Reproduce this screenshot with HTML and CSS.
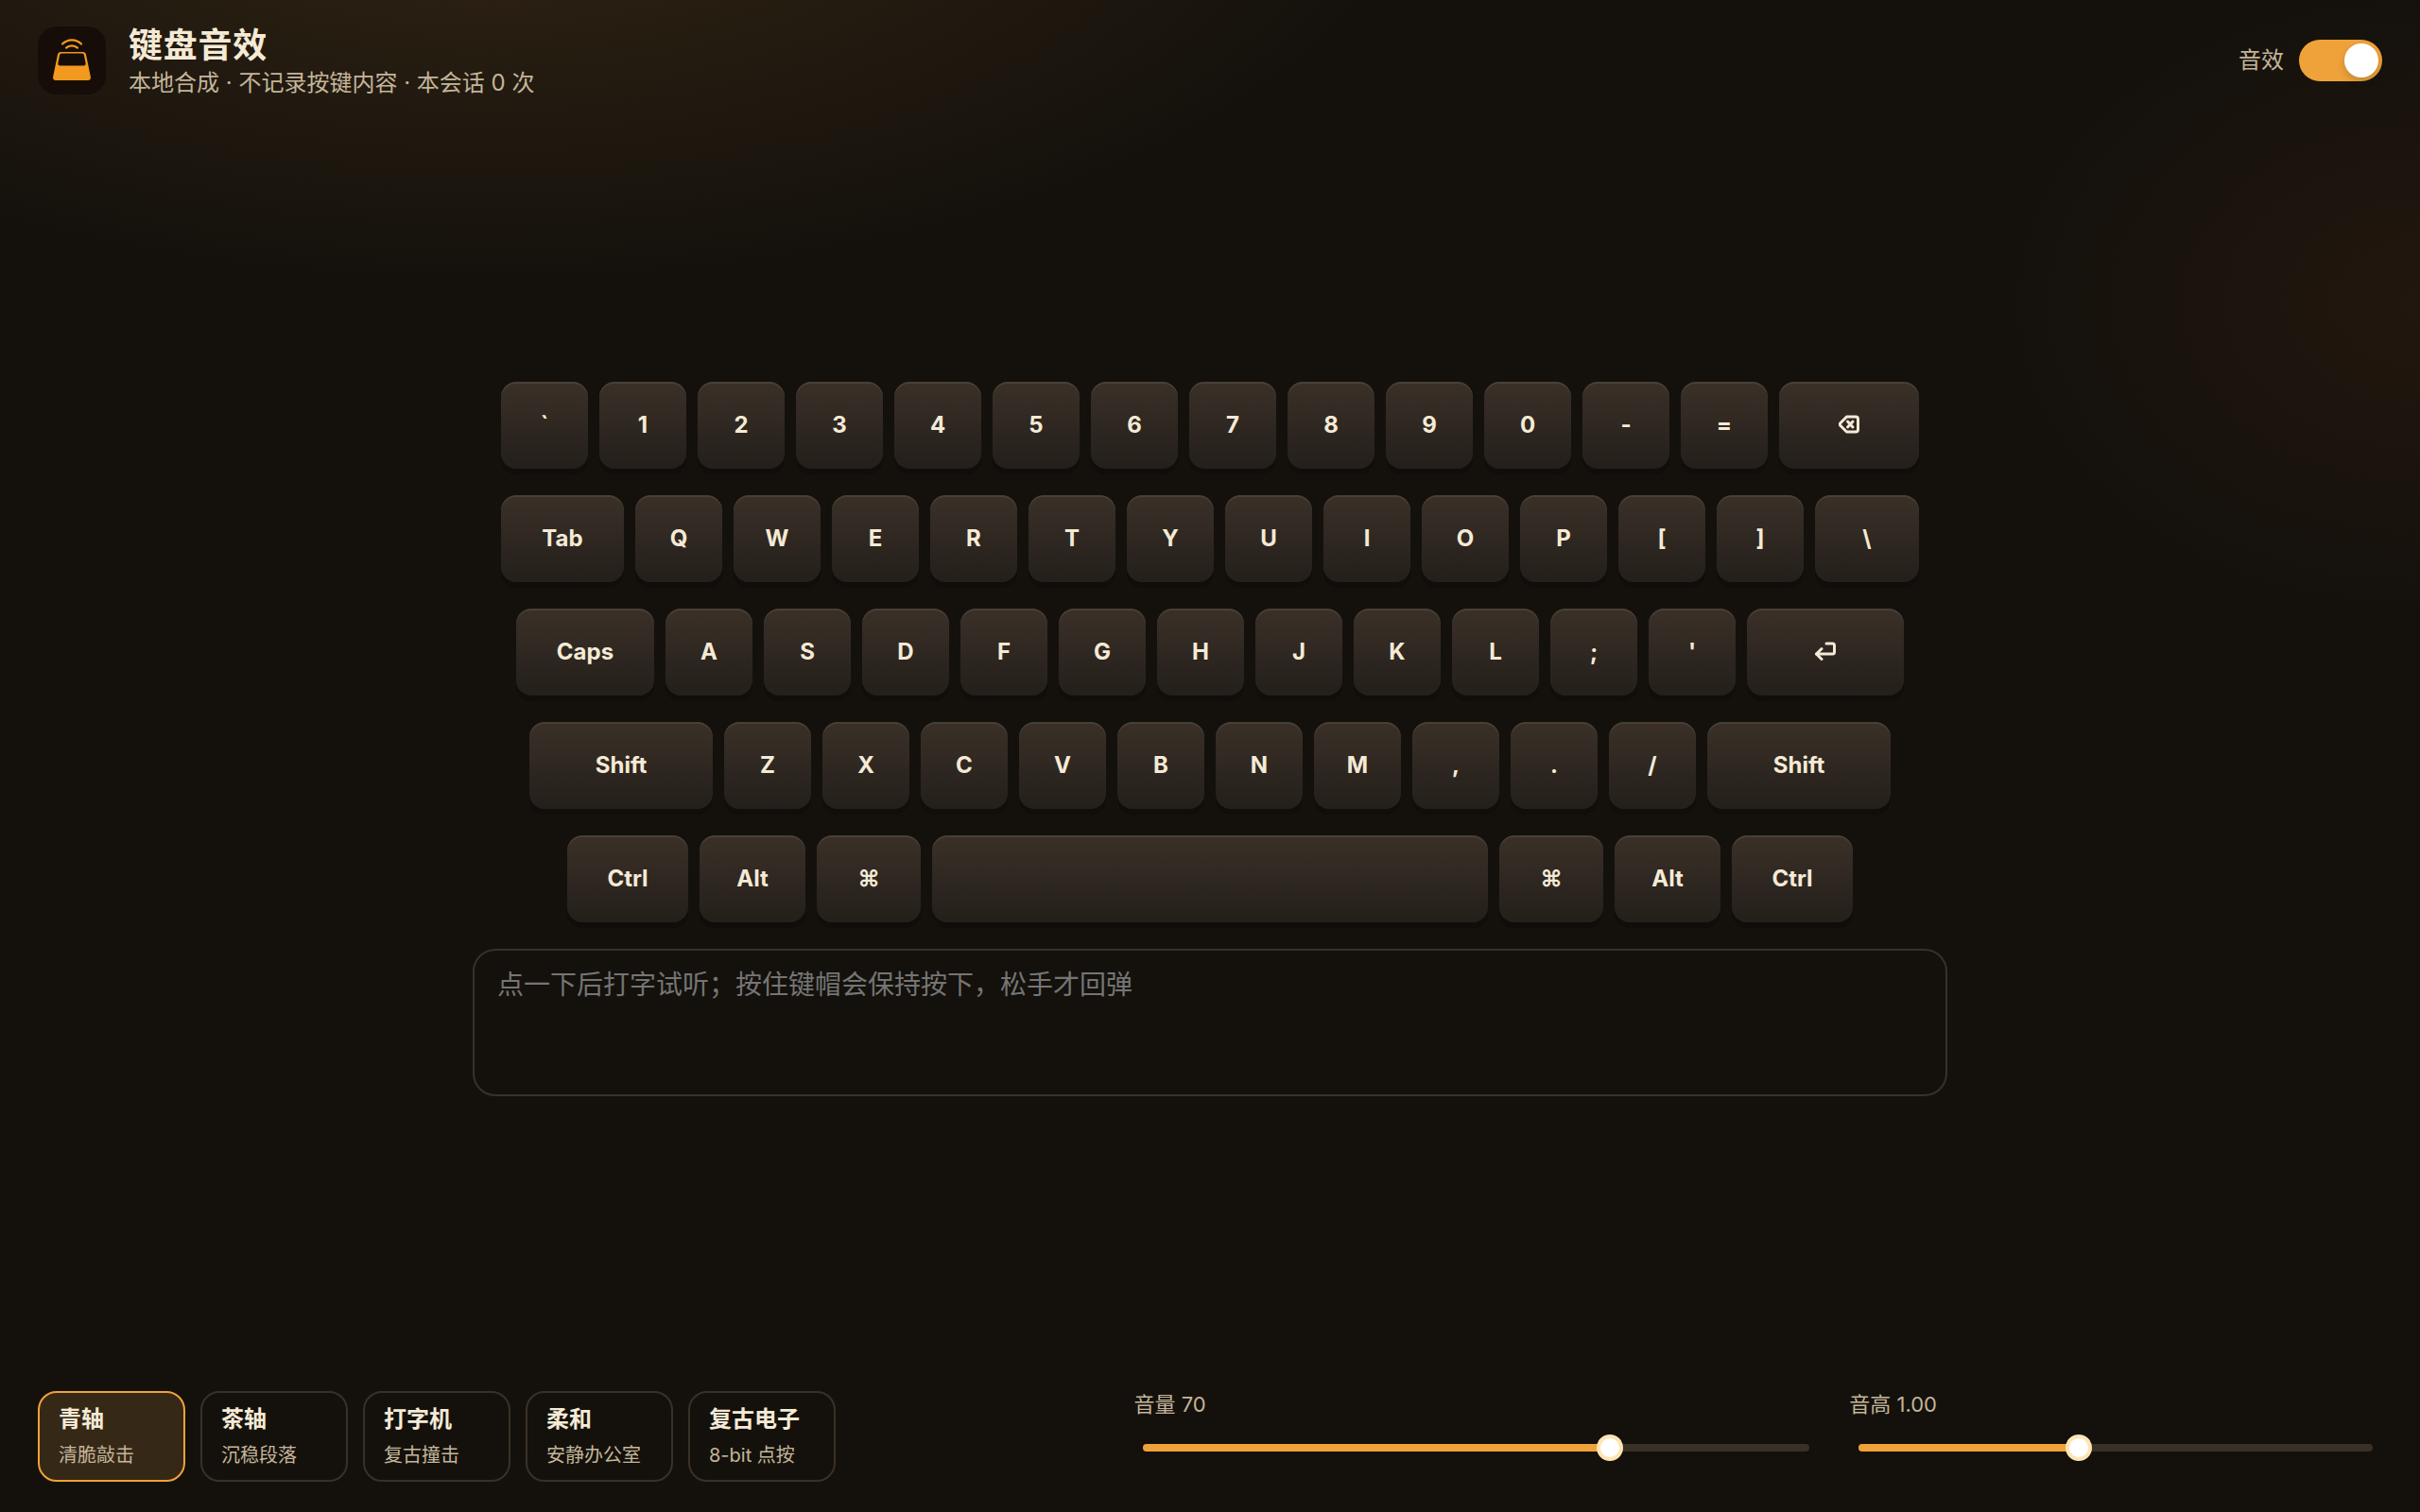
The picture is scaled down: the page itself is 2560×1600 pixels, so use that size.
FILE: index.html
```html
<!DOCTYPE html>
<html lang="zh-CN">

<head>
  <meta charset="UTF-8">
  <meta name="viewport" content="width=device-width, initial-scale=1.0">
  <link rel="stylesheet" href="styles.css">
  <title>键盘音效</title>
</head>

<body>
  <header class="topbar">
    <svg class="logo" viewBox="0 0 72 72" aria-hidden="true">
      <rect width="72" height="72" rx="20" fill="#160d08"/>
      <path d="M26 18.500a14 14 0 0 1 20 0" fill="none" stroke="#f29a20" stroke-width="2.200" stroke-linecap="round"/>
      <path d="M30 22.600a9 9 0 0 1 12 0" fill="none" stroke="#f29a20" stroke-width="2.200" stroke-linecap="round"/>
      <path fill="#f29a20" fill-rule="evenodd" d="M24.500 27h23q3 0 3.600 3l4.700 23q.8 4-3 4H19.200q-3.800 0-3-4l4.700-23q.6-3 3.600-3zM25 28.500q-1.500 0-1.900 1.800l-1.700 8.700q-.4 2.400 1.700 2.400h25.800q2.100 0 1.700-2.400l-1.700-8.700q-.4-1.800-1.900-1.800z"/>
    </svg>
    <div class="brand">
      <h1>键盘音效</h1>
      <p>本地合成 · 不记录按键内容 · 本会话 <span id="count">0</span> 次</p>
    </div>
    <label class="switch">
      <span>音效</span>
      <input type="checkbox" role="switch" id="enabled" checked>
    </label>
  </header>

  <main>
    <!-- keys are filled in by script.js -->
    <div class="keyboard" id="keyboard"></div>
    <textarea class="tryout" aria-label="试听输入" placeholder="点一下后打字试听；按住键帽会保持按下，松手才回弹"></textarea>
  </main>

  <footer class="controls">
    <div class="packs">
      <button type="button" class="pack active"><b>青轴</b><span>清脆敲击</span></button>
      <button type="button" class="pack"><b>茶轴</b><span>沉稳段落</span></button>
      <button type="button" class="pack"><b>打字机</b><span>复古撞击</span></button>
      <button type="button" class="pack"><b>柔和</b><span>安静办公室</span></button>
      <button type="button" class="pack"><b>复古电子</b><span>8-bit 点按</span></button>
    </div>
    <div class="field">
      <label for="volume">音量 <span id="volume-value">70</span></label>
      <div class="slider">
        <div class="rail"><div class="fill" id="volume-fill"></div></div>
        <input type="range" id="volume" min="0" max="100" value="70">
      </div>
    </div>
    <div class="field">
      <label for="pitch">音高 <span id="pitch-value">1.00</span></label>
      <div class="slider">
        <div class="rail"><div class="fill" id="pitch-fill"></div></div>
        <input type="range" id="pitch" min="0.7" max="1.4" step="0.01" value="1">
      </div>
    </div>
  </footer>

  <script src="script.js"></script>
</body>

</html>
```

FILE: styles.css
```css
* {
  box-sizing: border-box;
}

body {
  margin: 0;
  min-height: 100vh;
  display: grid;
  grid-template-rows: auto 1fr auto;
  color: #f5ead6;
  background:
    radial-gradient(1000px 460px at 20% -10%, rgba(240, 160, 70, 0.15), transparent),
    radial-gradient(440px 330px at 100% 20%, rgba(200, 90, 40, 0.08), transparent),
    #14110c;
  font-family: Inter, "Noto Sans CJK SC", sans-serif;
  font-size: 24px;
}

button,
textarea {
  font: inherit;
  color: inherit;
}

/* header */
.topbar {
  display: flex;
  align-items: center;
  gap: 24px;
  padding: 24px 40px;
}

.logo {
  width: 72px;
  height: 72px;
}

.brand h1 {
  margin: 0;
  font-size: 36px;
  line-height: 48px;
  font-weight: 700;
  letter-spacing: 0.02em;
}

.brand p {
  margin: 0;
  line-height: 32px;
  color: #c4b59a;
}

.switch {
  display: flex;
  align-items: center;
  gap: 16px;
  margin-left: auto;
  line-height: 32px;
  color: #c4b59a;
}

.switch input {
  appearance: none;
  display: flex;
  justify-content: flex-start;
  width: 88px;
  height: 44px;
  margin: 0;
  padding: 4px;
  border-radius: 22px;
  background: #3a3026;
}

.switch input::before {
  content: "";
  width: 36px;
  height: 36px;
  border-radius: 50%;
  background: #fff;
  box-shadow: 0 4px 8px rgba(0, 35, 11, 0.2);
}

.switch input:checked {
  justify-content: flex-end;
  background: #f0a23a;
}

/* keyboard */
main {
  display: flex;
  flex-direction: column;
  align-items: center;
  justify-content: center;
  gap: 28px;
}

.keyboard {
  display: grid;
  gap: 28px;
}

.row {
  display: flex;
  justify-content: center;
  gap: 12px;
}

.key {
  display: flex;
  align-items: center;
  justify-content: center;
  width: 92px;
  height: 92px;
  padding: 0 0 2px;
  border: 0;
  border-radius: 16px;
  background: linear-gradient(180deg, #3a3028, #241f1a);
  box-shadow: inset 0 2px 0 rgba(255, 255, 255, 0.08), 0 6px 0 #100d0a;
  font-weight: 700;
}

.key svg {
  width: 22px;
  height: 20px;
  fill: none;
  stroke: currentColor;
  stroke-width: 3;
  stroke-linecap: round;
  stroke-linejoin: round;
}

.key.down {
  transform: translateY(4px);
  box-shadow: none;
}

.w-110 { width: 110px; }
.w-112 { width: 112px; }
.w-128 { width: 128px; }
.w-130 { width: 130px; }
.w-146 { width: 146px; }
.w-148 { width: 148px; }
.w-166 { width: 166px; }
.w-194 { width: 194px; }
.w-588 { width: 588px; }

.tryout {
  width: 1560px;
  max-width: 100%;
  height: 156px;
  padding: 16px 24px;
  border: 2px solid #3a3026;
  border-radius: 24px;
  background: transparent;
  font-size: 28px;
  line-height: 40px;
  resize: none;
}

.tryout::placeholder {
  color: #757575;
}

/* bottom controls */
.controls {
  display: grid;
  grid-template-columns: 1.4fr 0.9fr 0.7fr;
  gap: 32px;
  padding: 36px 40px 32px;
}

.packs {
  display: flex;
  gap: 16px;
}

.pack {
  display: flex;
  flex-direction: column;
  justify-content: center;
  gap: 4px;
  width: 156px;
  height: 96px;
  padding: 0 20px;
  border: 2px solid #3a3026;
  border-radius: 20px;
  background: transparent;
  text-align: left;
}

.pack b {
  line-height: 36px;
}

.pack span {
  font-size: 20px;
  line-height: 32px;
  color: #c4b59a;
}

.pack.active {
  border-color: #f0a23a;
  background: #362816;
}

.field label {
  display: block;
  font-size: 22px;
  line-height: 28px;
  color: #c4b59a;
}

.slider {
  display: grid;
  align-items: center;
  margin: 18px 10px 0;
}

.rail,
.slider input {
  grid-area: 1 / 1;
}

.rail {
  height: 8px;
  border-radius: 4px;
  background: #3a3026;
}

.fill {
  height: 8px;
  border-radius: 4px;
  background: #f0a23a;
}

/* the thumb centre travels the full rail, so the input hangs over by half a thumb */
.slider input {
  appearance: none;
  height: 28px;
  margin: 0 -14px;
  background: transparent;
}

.slider input::-webkit-slider-thumb {
  appearance: none;
  width: 28px;
  height: 28px;
  border: 4px solid #ffe4b3;
  border-radius: 50%;
  background: #fff;
}
```

FILE: script.js
```js
const backspaceIcon = '<svg viewBox="0 0 22 20" aria-hidden="true"><path d="M8.500 2H18q2.500 0 2.500 2.500v11q0 2.500-2.500 2.500H8.500L1.800 11.200q-1-1.200 0-2.400z"/><path d="M9.500 7l5.500 6M15 7l-5.500 6"/></svg>';
const enterIcon = '<svg viewBox="0 0 22 20" aria-hidden="true"><path d="M12 2h6.500q2 0 2 2v7q0 2-2 2H1.500"/><path d="M7 7.500L1.500 13L7 18.500"/></svg>';

const rows = [
  ['`', '1', '2', '3', '4', '5', '6', '7', '8', '9', '0', '-', '=', ['Backspace', 148, backspaceIcon]],
  [['Tab', 130], 'Q', 'W', 'E', 'R', 'T', 'Y', 'U', 'I', 'O', 'P', '[', ']', ['\\', 110]],
  [['Caps', 146], 'A', 'S', 'D', 'F', 'G', 'H', 'J', 'K', 'L', ';', "'", ['Enter', 166, enterIcon]],
  [['Shift', 194], 'Z', 'X', 'C', 'V', 'B', 'N', 'M', ',', '.', '/', ['Shift', 194]],
  [['Ctrl', 128], ['Alt', 112], ['⌘', 110], ['', 588], ['⌘', 110], ['Alt', 112], ['Ctrl', 128]]
];

const keyboard = document.getElementById('keyboard');
let count = 0;

rows.forEach(function (keys) {
  const row = document.createElement('div');
  row.className = 'row';
  keys.forEach(function (item) {
    const key = document.createElement('button');
    key.type = 'button';
    key.className = 'key';
    if (Array.isArray(item)) {
      key.classList.add('w-' + item[1]);
      if (item[2]) {
        key.innerHTML = item[2];
        key.setAttribute('aria-label', item[0]);
      } else {
        key.textContent = item[0];
      }
      if (!item[0]) key.setAttribute('aria-label', '空格');
    } else {
      key.textContent = item;
    }
    key.addEventListener('pointerdown', function () {
      key.classList.add('down');
      count++;
      document.getElementById('count').textContent = count;
    });
    ['pointerup', 'pointerleave'].forEach(function (name) {
      key.addEventListener(name, function () {
        key.classList.remove('down');
      });
    });
    row.appendChild(key);
  });
  keyboard.appendChild(row);
});

const packs = document.querySelectorAll('.pack');
packs.forEach(function (pack) {
  pack.addEventListener('click', function () {
    packs.forEach(function (p) { p.classList.remove('active'); });
    pack.classList.add('active');
  });
});

function bindSlider(id, digits) {
  const input = document.getElementById(id);
  function update() {
    const value = Number(input.value);
    const percent = (value - input.min) / (input.max - input.min) * 100;
    document.getElementById(id + '-fill').style.width = percent + '%';
    document.getElementById(id + '-value').textContent = value.toFixed(digits);
  }
  input.addEventListener('input', update);
  update();
}

bindSlider('volume', 0);
bindSlider('pitch', 2);
```
